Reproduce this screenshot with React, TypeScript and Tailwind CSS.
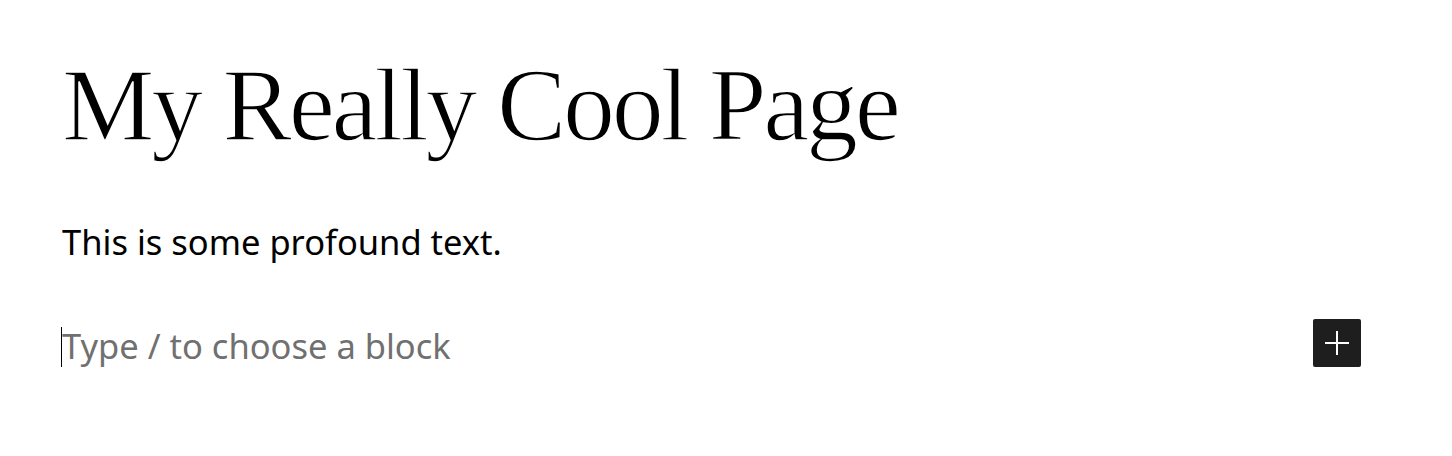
export default function App() {
  return (
    <div className="h-[456px] w-full overflow-hidden bg-white">
      <div className="flex flex-col pl-[62px] pr-[91px] pt-[48px]">
        <h1 className="font-['Liberation_Serif',serif] text-[104px] font-normal leading-[1.1] tracking-[-3.3px] text-black [-webkit-text-stroke:1.6px_#fff]">
          My Really Cool Page
        </h1>
        <p className="mt-[58px] font-['Noto_Sans',sans-serif] text-[34.5px] leading-[1.3] text-black">
          This is some profound text.
        </p>
        <div className="mt-[59px] flex items-start justify-between">
          <div className="flex items-start">
            <span className="-ml-px mt-[3px] h-[40px] w-px bg-black" />
            <span className="font-['Noto_Sans',sans-serif] text-[34.5px] leading-[1.3] text-[#707070]">
              Type / to choose a block
            </span>
          </div>
          <button
            type="button"
            aria-label="Add block"
            className="-mt-[5px] flex h-[48px] w-[48px] items-center justify-center rounded-[2px] bg-[#1e1e1e]"
          >
            <svg width="24" height="24" viewBox="0 0 24 24" fill="none" shapeRendering="crispEdges">
              <path d="M12 0v24M0 12h24" stroke="#fff" strokeWidth="2" />
            </svg>
          </button>
        </div>
      </div>
    </div>
  );
}
